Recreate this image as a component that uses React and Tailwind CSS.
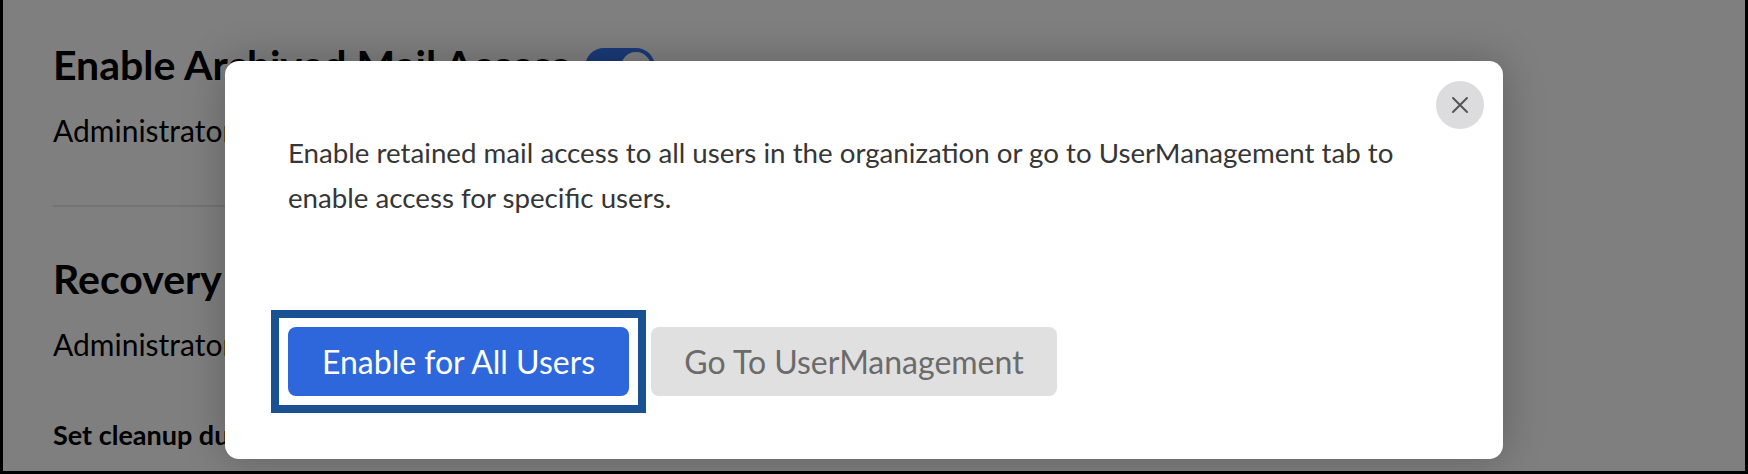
import React from 'react';

const CloseIcon = () => (
  <svg width="20" height="20" viewBox="0 0 20 20" fill="none" stroke="#555" strokeWidth="2" strokeLinecap="round">
    <path d="M3 3 L17 17 M17 3 L3 17" />
  </svg>
);

export default function App() {
  return (
    <div className="relative w-[1748px] h-[474px] overflow-hidden bg-white border-l-[3px] border-r-[3px] border-b-[3px] border-black font-['Lato',sans-serif]">
      {/* Settings page behind the dialog */}
      <div className="pl-[50px] pt-[44px] w-[1450px]">
        <div className="flex items-start gap-[16px]">
          <h2 className="text-[41px] leading-none font-bold text-black">Enable Archived Mail Access</h2>
          <div className="mt-[4px] w-[70px] h-[38px] rounded-full bg-[#3574f0] p-[4px] flex justify-end">
            <div className="w-[30px] h-[30px] rounded-full bg-white" />
          </div>
        </div>
        <p className="mt-[29px] text-[30px] leading-none text-black">Administrators can allow users to access archived mail.</p>
        <div className="mt-[60px] h-[2px] bg-[#e6e6e6]" />
        <h2 className="mt-[51px] text-[41px] leading-none font-bold text-black">Recovery Settings</h2>
        <p className="mt-[30px] text-[30px] leading-none text-black">Administrators can recover deleted mail.</p>
        <p className="mt-[62px] text-[27px] leading-none font-bold text-black">Set cleanup duration</p>
      </div>

      {/* Overlay */}
      <div className="absolute inset-0 bg-black/50" />

      {/* Dialog */}
      <div className="absolute left-[222px] top-[61px] w-[1278px] h-[398px] bg-white rounded-[14px] shadow-[0_0_40px_rgba(0,0,0,0.25)] pl-[63px] pt-[69px]">
        <button className="absolute top-[20px] right-[19px] w-[48px] h-[48px] rounded-full bg-[#dcdcdf] flex items-center justify-center">
          <CloseIcon />
        </button>
        <p className="w-[1140px] text-[27.7px] leading-[45px] text-[#363636]">
          Enable retained mail access to all users in the organization or go to UserManagement tab to enable access for specific users.
        </p>
        <div className="mt-[107px] flex items-center gap-[22px]">
          <button className="relative w-[341px] h-[69px] rounded-lg bg-[#2e67db] text-white text-[32px]">
            <span className="absolute -inset-[17px] border-[8px] border-[#1a5192]" />
            Enable for All Users
          </button>
          <button className="w-[406px] h-[69px] rounded-lg bg-[#e0e0e0] text-[#6b6b6b] text-[32px]">
            Go To UserManagement
          </button>
        </div>
      </div>
    </div>
  );
}
